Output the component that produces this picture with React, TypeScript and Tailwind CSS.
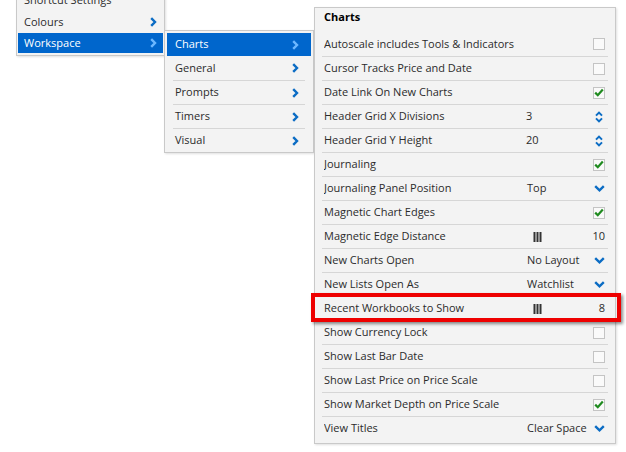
import React from "react";

type Control =
  | { kind: "check"; on: boolean }
  | { kind: "spin"; value: string }
  | { kind: "select"; value: string }
  | { kind: "slider"; value: string };

interface Setting {
  label: string;
  control: Control;
}

const settings: Setting[] = [
  { label: "Autoscale includes Tools & Indicators", control: { kind: "check", on: false } },
  { label: "Cursor Tracks Price and Date", control: { kind: "check", on: false } },
  { label: "Date Link On New Charts", control: { kind: "check", on: true } },
  { label: "Header Grid X Divisions", control: { kind: "spin", value: "3" } },
  { label: "Header Grid Y Height", control: { kind: "spin", value: "20" } },
  { label: "Journaling", control: { kind: "check", on: true } },
  { label: "Journaling Panel Position", control: { kind: "select", value: "Top" } },
  { label: "Magnetic Chart Edges", control: { kind: "check", on: true } },
  { label: "Magnetic Edge Distance", control: { kind: "slider", value: "10" } },
  { label: "New Charts Open", control: { kind: "select", value: "No Layout" } },
  { label: "New Lists Open As", control: { kind: "select", value: "Watchlist" } },
  { label: "Recent Workbooks to Show", control: { kind: "slider", value: "8" } },
  { label: "Show Currency Lock", control: { kind: "check", on: false } },
  { label: "Show Last Bar Date", control: { kind: "check", on: false } },
  { label: "Show Last Price on Price Scale", control: { kind: "check", on: false } },
  { label: "Show Market Depth on Price Scale", control: { kind: "check", on: true } },
  { label: "View Titles", control: { kind: "select", value: "Clear Space" } },
];

const ChevronRight = ({ light }: { light?: boolean }) => (
  <svg width="7" height="10" viewBox="0 0 7 10" className="shrink-0">
    <path
      d="M1.2 1.2 L5 5 L1.2 8.8"
      fill="none"
      stroke={light ? "#6cb8ff" : "#0b6cc4"}
      strokeWidth="2.4"
    />
  </svg>
);

const ChevronDown = () => (
  <svg width="11" height="7" viewBox="0 0 11 7">
    <path d="M1.2 1.2 L5.5 5.3 L9.8 1.2" fill="none" stroke="#0b6cc4" strokeWidth="2.4" />
  </svg>
);

const Spinner = () => (
  <svg width="8" height="12" viewBox="0 0 8 12">
    <path d="M1 4.6 L4 1.6 L7 4.6" fill="none" stroke="#0b6cc4" strokeWidth="2" />
    <path d="M1 7.4 L4 10.4 L7 7.4" fill="none" stroke="#0b6cc4" strokeWidth="2" />
  </svg>
);

const SliderGrip = () => (
  <svg width="9" height="10" viewBox="0 0 9 10">
    <rect x="0.5" y="0" width="2" height="10" fill="#333" />
    <rect x="3.5" y="0" width="2" height="10" fill="#333" />
    <rect x="6.5" y="0" width="2" height="10" fill="#333" />
  </svg>
);

const CheckBox = ({ on }: { on: boolean }) => (
  <div className="w-[12px] h-[12px] border border-[#c4c4c4] bg-[#fafafa] flex items-center justify-center">
    {on && (
      <svg width="10" height="9" viewBox="0 0 10 9">
        <path d="M1.2 4.6 L3.8 7.2 L8.8 1.6" fill="none" stroke="#1f8a1f" strokeWidth="2.2" />
      </svg>
    )}
  </div>
);

const SettingRow = ({ setting, first }: { setting: Setting; first: boolean }) => {
  const c = setting.control;
  return (
    <div
      className={`h-[24px] mx-[7px] px-[2px] pr-[3px] flex items-center ${
        first ? "" : "border-t border-[#d6d6d6]"
      }`}
    >
      <span className="flex-1 truncate">{setting.label}</span>
      {c.kind === "check" && <CheckBox on={c.on} />}
      {c.kind === "spin" && (
        <>
          <span className="w-[67px]">{c.value}</span>
          <div className="w-[12px] flex justify-center">
            <Spinner />
          </div>
        </>
      )}
      {c.kind === "select" && (
        <>
          <span className="w-[67px] whitespace-nowrap">{c.value}</span>
          <ChevronDown />
        </>
      )}
      {c.kind === "slider" && (
        <div className="w-[79px] flex items-center justify-between pl-[7px]">
          <SliderGrip />
          <span>{c.value}</span>
        </div>
      )}
    </div>
  );
};

export default function App() {
  return (
    <div
      className="relative w-[626px] h-[452px] bg-white overflow-hidden text-[11px] text-[#2b2b2b]"
      style={{ fontFamily: '"Open Sans", "Liberation Sans", sans-serif' }}
    >
      {/* first level menu */}
      <div className="absolute left-[16px] top-[-14px] w-[149px] bg-[#f3f3f3] border border-[#c9c9c9] p-[2px] px-[1px] shadow-[1px_1px_2px_rgba(0,0,0,0.12)]">
        <div className="h-[22px] flex items-center pl-[6px] pr-[6px]">
          <span className="flex-1">Shortcut Settings</span>
        </div>
        <div className="h-[22px] flex items-center pl-[6px] pr-[6px]">
          <span className="flex-1">Colours</span>
          <ChevronRight />
        </div>
        <div className="h-[20px] flex items-center pl-[6px] pr-[6px] bg-[#0066cc] text-white">
          <span className="flex-1">Workspace</span>
          <ChevronRight light />
        </div>
      </div>

      {/* second level menu */}
      <div className="absolute left-[164px] top-[30px] w-[150px] bg-[#f3f3f3] border border-[#c9c9c9] pt-[2px] px-[2px] shadow-[1px_1px_2px_rgba(0,0,0,0.12)]">
        <div className="h-[23px] flex items-center pl-[8px] pr-[12px] bg-[#0066cc] text-white">
          <span className="flex-1">Charts</span>
          <ChevronRight light />
        </div>
        {["General", "Prompts", "Timers", "Visual"].map((item, i) => (
          <div
            key={item}
            className={`h-[24px] mx-[6px] px-[2px] pr-[6px] flex items-center ${
              i === 0 ? "" : "border-t border-[#d6d6d6]"
            }`}
          >
            <span className="flex-1">{item}</span>
            <ChevronRight />
          </div>
        ))}
      </div>

      {/* settings panel */}
      <div className="absolute left-[314px] top-[7px] w-[302px] bg-[#f3f3f3] border border-[#c9c9c9] pb-[3px] shadow-[1px_1px_2px_rgba(0,0,0,0.12)]">
        <div className="h-[24px] flex items-center px-[9px] pb-[5px] font-bold text-black">Charts</div>
        {settings.map((s, i) => (
          <SettingRow key={s.label} setting={s} first={i === 0} />
        ))}
      </div>

      {/* highlight */}
      <div className="absolute left-[311px] top-[293px] w-[310px] h-[29px] border-4 border-[#ee0000] shadow-[2px_2px_3px_rgba(0,0,0,0.45)]" />
    </div>
  );
}
